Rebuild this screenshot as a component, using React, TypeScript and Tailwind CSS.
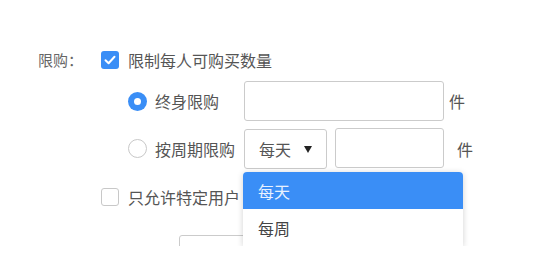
const FONT = { fontFamily: '"Noto Sans CJK SC", "Noto Sans", sans-serif' };

function Checkbox({ checked }: { checked?: boolean }) {
  if (checked) {
    return (
      <span className="inline-flex size-[18px] shrink-0 items-center justify-center rounded-[3px] bg-[#3a8ef6]">
        <svg width="12" height="10" viewBox="0 0 12 10" fill="none">
          <path d="M1.5 5.2 4.6 8.2 10.5 1.8" stroke="#fff" strokeWidth="2" strokeLinecap="round" strokeLinejoin="round" />
        </svg>
      </span>
    );
  }
  return <span className="inline-block size-[18px] shrink-0 rounded-[3px] border border-[#c8c8c8] bg-white" />;
}

function Radio({ checked }: { checked?: boolean }) {
  if (checked) {
    return (
      <span className="inline-flex size-[19px] shrink-0 items-center justify-center rounded-full bg-[#3a8ef6]">
        <span className="size-[7px] rounded-full bg-white" />
      </span>
    );
  }
  return <span className="inline-block size-[19px] shrink-0 rounded-full border border-[#c8c8c8] bg-white" />;
}

export default function App() {
  return (
    <div className="relative h-[246px] w-[551px] overflow-hidden bg-white text-[16px] text-[#555]" style={FONT}>
      <div className="flex flex-col pt-[50px]">
        {/* 限购 row */}
        <div className="flex h-[20px] items-center">
          <span className="w-[101px] shrink-0 whitespace-nowrap pl-[38px] text-[15px] text-[#666]">限购：</span>
          <Checkbox checked />
          <span className="ml-[9px] whitespace-nowrap leading-none">限制每人可购买数量</span>
        </div>

        {/* 终身限购 */}
        <div className="mt-[11px] flex h-[40px] items-center pl-[128px]">
          <div className="flex w-[116px] shrink-0 items-center gap-[8px]">
            <Radio checked />
            <span className="whitespace-nowrap">终身限购</span>
          </div>
          <div className="h-[40px] w-[200px] shrink-0 rounded-[3px] border border-[#cbcbcb] bg-white" />
          <span className="ml-[5px]">件</span>
        </div>

        {/* 按周期限购 */}
        <div className="mt-[7px] flex h-[41px] items-center pl-[128px]">
          <div className="flex w-[116px] shrink-0 items-center gap-[8px]">
            <Radio />
            <span className="whitespace-nowrap">按周期限购</span>
          </div>
          <div className="flex h-[40px] w-[83px] shrink-0 items-center self-end rounded-[3px] border border-[#cbcbcb] bg-white pl-[14px]">
            <span>每天</span>
            <svg className="ml-[13px]" width="8" height="7" viewBox="0 0 8 7">
              <path d="M0 0h8L4 7z" fill="#222" />
            </svg>
          </div>
          <div className="ml-[8px] h-[40px] w-[109px] shrink-0 self-start rounded-[3px] border border-[#cbcbcb] bg-white" />
          <span className="ml-[13px]">件</span>
        </div>

        {/* 只允许特定用户 */}
        <div className="mt-[18px] flex h-[20px] items-center pl-[101px]">
          <Checkbox />
          <span className="ml-[9px] whitespace-nowrap leading-none">只允许特定用户</span>
        </div>

        <div className="mt-[28px] pl-[179px]">
          <div className="h-[40px] w-[200px] rounded-[3px] border border-[#cbcbcb] bg-white" />
        </div>
      </div>

      {/* dropdown menu */}
      <ul className="absolute left-[243px] top-[172px] w-[220px] overflow-hidden rounded-t-[4px] bg-white shadow-[0_1px_6px_rgba(0,0,0,0.18)]">
        <li className="flex h-[37px] items-center bg-[#3a8ef6] pl-[15px] text-[#e8f1ff]">每天</li>
        <li className="flex h-[37px] items-center pl-[15px] text-[#444]">每周</li>
      </ul>
    </div>
  );
}
